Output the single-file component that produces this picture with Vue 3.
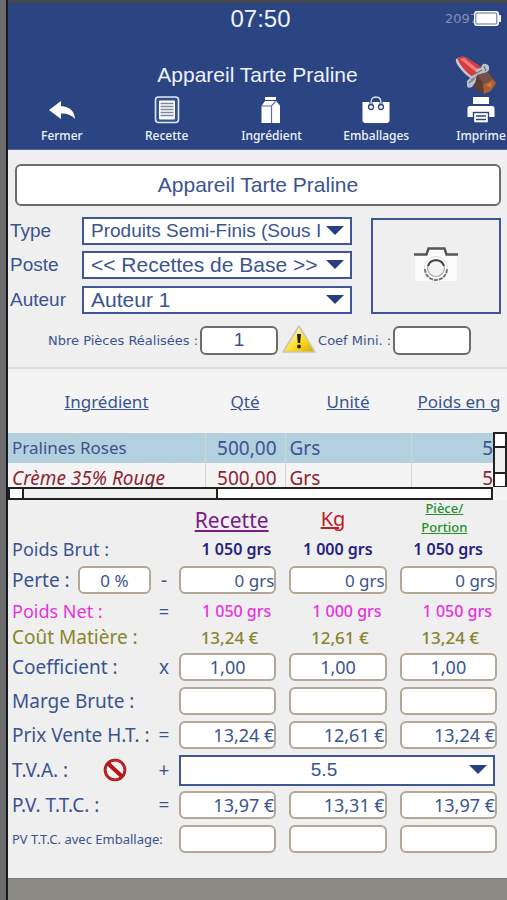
<template>
  <main class="screen">
    <header class="top">
      <div class="status">
        <span class="status-time">07:50</span>
        <span class="status-right">
          <span class="status-mem">2097</span>
          <svg class="battery" viewBox="0 0 27 15" aria-hidden="true">
            <rect x="0" y="0" width="25" height="15" rx="3" fill="#fff" />
            <rect x="24" y="4" width="3" height="7" rx="1" fill="#fff" />
            <rect x="1.8" y="2" width="21" height="11" rx="1" fill="none" stroke="#2b4583" stroke-width="0.8" />
          </svg>
        </span>
      </div>
      <div class="title-row">
        <h1>Appareil Tarte Praline</h1>
        <svg class="praline" viewBox="0 0 42 38" aria-hidden="true">
          <path d="M1 3 Q5 0 10 1 L32 15 L22 26 Q10 20 4 11 Q0 6 1 3Z" fill="#c3c7d2" />
          <path d="M2 2 Q7 -1 12 2 L31 14 L20 23 Q7 14 2 2Z" fill="#d83a40" />
          <path d="M5 3 L22 17 L25 15 L9 2Z" fill="#ee7c7c" />
          <path d="M12 25 L17 20 L22 17 L21 13 L26 12 Q27 7 31 8 Q35 9 34 14 L30 18 L24 22 L20 27 L17 31 Q12 33 12 29Z" fill="#b9c2cc" />
          <path d="M20 18 L27 14 M16 24 L25 19 M29 10 L31 15 M14 27 L19 23" stroke="#6f7b87" stroke-width="1.4" />
          <path d="M22 19 L33 16 L41 26 L36 35 L28 38 L19 32Z" fill="#5e3d36" />
          <path d="M22 19 L33 16 L38 23 L28 27Z" fill="#75524a" />
          <path d="M28 28 L38 23 L41 27 L36 35 L29 38Z" fill="#a95f35" />
          <path d="M31 29 L37 26 L36 32Z" fill="#c57c48" />
        </svg>
      </div>
      <nav class="toolbar">
        <button v-for="t in tools" :key="t.id" type="button" class="tool">
          <svg v-if="t.id === 'close'" viewBox="0 0 28 28" aria-hidden="true">
            <path d="M1 14 L13 5 V10 Q26 11 27 23 Q22 17 13 17.500 V23Z" fill="#fff" />
          </svg>
          <svg v-else-if="t.id === 'recipe'" viewBox="0 0 28 28" aria-hidden="true">
            <rect x="2.500" y="1" width="23" height="25.500" rx="3" fill="#33508f" stroke="#dfe9f8" stroke-width="1.600" />
            <rect x="6" y="4.500" width="16" height="19" rx="1" fill="#fff" />
            <path d="M7.500 7.500H20.500M7.500 10.500H20.500M7.500 13.500H20.500M7.500 16.500H20.500M7.500 19.500H20.500" stroke="#7f86a0" stroke-width="1.500" />
          </svg>
          <svg v-else-if="t.id === 'ingredient'" viewBox="0 0 28 28" aria-hidden="true">
            <path d="M8 1H19V4H8Z M8 5H19L23 9.500V27H4.500V10Z" fill="#fff" />
            <path d="M4.500 10H14.500L18.500 5.500M14.500 10V27" fill="none" stroke="#5a6ea3" stroke-width="1.200" />
          </svg>
          <svg v-else-if="t.id === 'pack'" viewBox="0 0 28 28" aria-hidden="true">
            <path d="M0.500 6H27.500V24Q27.500 27 24.500 27H3.500Q0.500 27 0.500 24Z" fill="#fff" />
            <path d="M9 9V6.500Q9 1 14 1Q19 1 19 6.500V9" fill="none" stroke="#2b4583" stroke-width="3" />
            <path d="M9 9V6.500Q9 1 14 1Q19 1 19 6.500V9" fill="none" stroke="#dfe9f8" stroke-width="1.300" />
            <circle cx="9" cy="11" r="2.500" fill="#fff" stroke="#2b4583" stroke-width="1.300" />
            <circle cx="19" cy="11" r="2.500" fill="#fff" stroke="#2b4583" stroke-width="1.300" />
          </svg>
          <svg v-else viewBox="0 0 28 28" aria-hidden="true">
            <path d="M6 1H22V8H6Z" fill="#fff" />
            <path d="M3 10H25Q27.500 10 27.500 12.500V21H0.500V12.500Q0.500 10 3 10Z" fill="#fff" />
            <rect x="6.500" y="16.500" width="15" height="10.500" fill="#fff" stroke="#2b4583" stroke-width="1.400" />
            <path d="M9 20H19M9 23.500H19" stroke="#2b4583" stroke-width="1.300" />
          </svg>
          <span>{{ t.label }}</span>
        </button>
      </nav>
    </header>

    <section class="form">
      <input v-model="name" class="name" type="text" aria-label="Nom de la recette" />
      <div class="form-main">
        <div class="fields">
          <template v-for="f in fields" :key="f.id">
            <label :for="f.id">{{ f.label }}</label>
            <div class="select-box">
              <select :id="f.id" :class="{ small: f.small }">
                <option>{{ f.value }}</option>
              </select>
              <span class="arrow"></span>
            </div>
          </template>
        </div>
        <button type="button" class="photo" aria-label="Photo">
          <svg viewBox="0 0 44 34" aria-hidden="true">
            <rect x="1" y="7" width="42" height="27" fill="#fbfbfb" />
            <path d="M13 7L15 2H30L32 7" fill="#fbfbfb" />
            <path d="M0 7.500H12.500L14.500 1.500H30.500L32.500 7.500H44" fill="none" stroke="#555" stroke-width="2.400" />
            <circle cx="22" cy="21" r="11.500" fill="#fff" stroke="#ddd" />
            <path d="M11 22A11 11 0 0 0 33 22" fill="none" stroke="#777" stroke-width="2" stroke-dasharray="4 1" />
            <circle cx="22" cy="21" r="8.500" fill="#f4f4f4" stroke="#aaa" stroke-width="1.200" />
            <path d="M14 19A8.500 8.500 0 0 1 30 19" fill="none" stroke="#444" stroke-width="2" />
          </svg>
        </button>
      </div>
      <div class="form-counts">
        <label for="pieces">Nbre Pièces Réalisées :</label>
        <input id="pieces" v-model="pieces" type="text" />
        <svg class="warn" viewBox="0 0 34 28" aria-hidden="true">
          <defs>
            <linearGradient id="warnFill" x1="0" y1="0" x2="1" y2="1">
              <stop offset="0.3" stop-color="#fff3a0" />
              <stop offset="0.6" stop-color="#fbd91c" />
              <stop offset="1" stop-color="#d9a400" />
            </linearGradient>
          </defs>
          <path d="M17 1L33 27H1Z" fill="url(#warnFill)" stroke="#c9c6b4" stroke-width="1.500" stroke-linejoin="round" />
          <path d="M15 9H19L18.200 18H15.800Z" fill="#222" />
          <circle cx="17" cy="21.500" r="2" fill="#222" />
        </svg>
        <label for="coef-mini">Coef Mini. :</label>
        <input id="coef-mini" type="text" />
      </div>
    </section>

    <section class="grid-box">
      <div class="grid-clip">
        <table>
          <thead>
            <tr>
              <th class="c-name"><a href="#">Ingrédient</a></th>
              <th class="c-qty"><a href="#">Qté</a></th>
              <th class="c-unit"><a href="#">Unité</a></th>
              <th class="c-weight"><a href="#">Poids en g</a></th>
            </tr>
          </thead>
          <tbody>
            <tr v-for="r in rows" :key="r.name" :class="r.cls">
              <td>{{ r.name }}</td>
              <td class="num">{{ r.qty }}</td>
              <td>{{ r.unit }}</td>
              <td class="num weight">{{ r.weight }}</td>
            </tr>
          </tbody>
        </table>
        <div class="vbar"><i></i><b></b><i></i></div>
      </div>
      <div class="hbar"><i></i><b></b></div>
    </section>

    <section class="calc">
      <div class="calc-row heads">
        <div class="lead"></div>
        <div class="vals">
          <a href="#" class="h-recipe">Recette</a>
          <a href="#" class="h-kg">Kg</a>
          <a href="#" class="h-piece">Pièce/<br />Portion</a>
        </div>
      </div>

      <div v-for="r in calc" :key="r.id" class="calc-row" :class="r.id">
        <div class="lead">
          <label v-if="r.type !== 'text'" :for="r.id + '-0'">{{ r.label }}</label>
          <span v-else>{{ r.label }}</span>
          <input v-if="r.id === 'perte'" v-model="lossPct" class="box pct" type="text" aria-label="Perte en pourcentage" />
          <button v-if="r.id === 'tva'" type="button" class="forbid" aria-label="Sans T.V.A.">
            <svg viewBox="0 0 24 24" aria-hidden="true">
              <circle cx="12" cy="12" r="9.900" fill="#f6f1f1" stroke="#8f1717" stroke-width="2.800" />
              <circle cx="12" cy="12" r="9.900" fill="none" stroke="#cf1f1f" stroke-width="1.600" />
              <path d="M5 5.500L19 18.500" stroke="#b81515" stroke-width="4" />
            </svg>
          </button>
          <span v-if="r.op" class="op">{{ r.op }}</span>
        </div>
        <div v-if="r.type === 'select'" class="select-box tva-box">
          <select :id="r.id + '-0'">
            <option>5.5</option>
          </select>
          <span class="arrow"></span>
        </div>
        <div v-else class="vals">
          <template v-for="(v, i) in r.values" :key="i">
            <span v-if="r.type === 'text'" class="val">{{ v }}</span>
            <input v-else :id="r.id + '-' + i" class="box" type="text" :value="v" :aria-label="i ? r.label + ' ' + units[i] : null" />
          </template>
        </div>
      </div>
    </section>
    <footer class="bottom"></footer>
  </main>
</template>

<script setup>
import { ref } from 'vue';

const name = ref('Appareil Tarte Praline');
const pieces = ref('1');
const lossPct = ref('0 %');

const units = ['Recette', 'Kg', 'Pièce/Portion'];

const tools = [
  { id: 'close', label: 'Fermer' },
  { id: 'recipe', label: 'Recette' },
  { id: 'ingredient', label: 'Ingrédient' },
  { id: 'pack', label: 'Emballages' },
  { id: 'print', label: 'Imprime' }
];

const fields = [
  { id: 'type', label: 'Type', value: 'Produits Semi-Finis (Sous I', small: true },
  { id: 'poste', label: 'Poste', value: '<< Recettes de Base >>' },
  { id: 'auteur', label: 'Auteur', value: 'Auteur 1' }
];

const rows = [
  { name: 'Pralines Roses', qty: '500,00', unit: 'Grs', weight: '5', cls: 'selected' },
  { name: 'Crème 35% Rouge', qty: '500,00', unit: 'Grs', weight: '5', cls: 'red' }
];

const calc = [
  { id: 'brut', label: 'Poids Brut :', type: 'text', values: ['1 050 grs', '1 000 grs', '1 050 grs'] },
  { id: 'perte', label: 'Perte :', op: '-', type: 'input', values: ['0 grs', '0 grs', '0 grs'] },
  { id: 'net', label: 'Poids Net :', op: '=', type: 'text', values: ['1 050 grs', '1 000 grs', '1 050 grs'] },
  { id: 'cout', label: 'Coût Matière :', type: 'text', values: ['13,24 €', '12,61 €', '13,24 €'] },
  { id: 'coef', label: 'Coefficient :', op: 'x', type: 'input', values: ['1,00', '1,00', '1,00'] },
  { id: 'marge', label: 'Marge Brute :', type: 'input', values: ['', '', ''] },
  { id: 'prix', label: 'Prix Vente H.T. :', op: '=', type: 'input', values: ['13,24 €', '12,61 €', '13,24 €'] },
  { id: 'tva', label: 'T.V.A. :', op: '+', type: 'select' },
  { id: 'ttc', label: 'P.V. T.T.C. :', op: '=', type: 'input', values: ['13,97 €', '13,31 €', '13,97 €'] },
  { id: 'emb', label: 'PV T.T.C. avec Emballage:', type: 'input', values: ['', '', ''] }
];
</script>

<style>
body {
  margin: 0;
  background: #6d6d6d;
}
</style>

<style scoped>
.screen {
  box-sizing: border-box;
  margin-left: 6px;
  border-left: 2px solid #15181f;
  background: #efefef;
  color: #3a548f;
  font-family: "Liberation Sans", Arial, sans-serif;
  overflow: hidden;
}
.screen *,
.screen *::before {
  box-sizing: border-box;
}
input,
select,
button {
  margin: 0;
  font: inherit;
  color: inherit;
}
button {
  padding: 0;
  border: 0;
  background: none;
}

/* en-tête */
.top {
  border-top: 3px solid #45484c;
  border-bottom: 1px solid #5068a0;
  background: #2b4583;
  color: #eef2fb;
}
.status {
  display: grid;
  grid-template-columns: 1fr auto 1fr;
  align-items: center;
  height: 31px;
  padding-left: 6px;
}
.status-time {
  grid-column: 2;
  font-size: 24px;
}
.status-right {
  display: flex;
  justify-content: flex-end;
  align-items: center;
  padding-right: 6px;
}
.status-mem {
  margin-right: -4px;
  font-family: "DejaVu Sans", sans-serif;
  font-size: 13px;
  color: #8291b5;
}
.battery {
  position: relative;
  width: 27px;
  height: 15px;
}
.title-row {
  display: grid;
  grid-template-columns: 1fr auto 1fr;
  align-items: center;
  height: 62px;
  padding-top: 20px;
}
h1 {
  grid-column: 2;
  margin: 0;
  font-size: 21px;
  font-weight: 400;
}
.praline {
  justify-self: end;
  width: 42px;
  height: 38px;
  margin-right: 10px;
}
.toolbar {
  display: flex;
  height: 53px;
}
.tool {
  flex: 0 0 21%;
  display: flex;
  flex-direction: column;
  align-items: center;
  padding-left: 3px;
  font-family: "Noto Sans", sans-serif;
  font-size: 12px;
  font-weight: 500;
  line-height: 22px;
  gap: 1px;
}
.tool svg {
  width: 28px;
  height: 28px;
}

/* fiche */
.form {
  padding: 14px 6px 12px 2px;
  border-bottom: 2px solid #dcdcdc;
}
.name {
  display: block;
  width: calc(100% - 5px);
  height: 42px;
  margin-left: 5px;
  border: 2px solid #6c6c6c;
  border-radius: 6px;
  background: #fff;
  text-align: center;
  font-size: 21px;
}
.form-main {
  display: flex;
  justify-content: space-between;
  gap: 19px;
  margin-top: 11px;
}
.fields {
  flex: 1;
  display: grid;
  grid-template-columns: 72px 1fr;
  row-gap: 6px;
  align-items: center;
  font-size: 19px;
}
.select-box {
  position: relative;
  height: 28px;
}
.select-box select {
  appearance: none;
  display: block;
  width: 100%;
  height: 100%;
  padding: 0 26px 0 7px;
  border: 2px solid #3f5796;
  border-radius: 0;
  background: #fff;
  font-size: 21px;
  line-height: 24px;
}
.select-box select.small {
  font-size: 19px;
}
.arrow {
  position: absolute;
  top: 50%;
  right: 8px;
  margin-top: -5px;
  border: 9px solid transparent;
  border-top-color: #253f80;
  border-bottom: 0;
  pointer-events: none;
}
.photo {
  flex: 0 0 130px;
  height: 96px;
  margin-top: 1px;
  border: 2px solid #3f5796;
}
.photo svg {
  width: 44px;
  height: 34px;
}
.form-counts {
  display: flex;
  align-items: center;
  margin-top: 11px;
  padding-left: 38px;
  font-family: "DejaVu Sans", sans-serif;
  font-size: 13px;
  white-space: nowrap;
}
.form-counts input {
  width: 78px;
  height: 29px;
  margin-left: 2px;
  border: 2px solid #6c6c6c;
  border-radius: 6px;
  background: #fff;
  text-align: center;
  font-family: "Liberation Sans", Arial, sans-serif;
  font-size: 19px;
}
.warn {
  width: 34px;
  height: 28px;
  margin: 0 2px 2px 4px;
}

/* liste des ingrédients */
.grid-box {
  background: #f4f4f4;
  font-family: "Noto Sans", sans-serif;
  font-size: 19px;
}
.grid-clip {
  position: relative;
  height: 118px;
  overflow: hidden;
}
table {
  width: 100%;
  border-collapse: collapse;
  table-layout: fixed;
}
th {
  height: 64px;
  padding: 0;
  font-size: 17px;
  font-weight: 400;
  white-space: nowrap;
}
th a {
  color: inherit;
}
.c-name {
  width: 197px;
}
.c-qty {
  width: 80px;
}
.c-unit {
  width: 126px;
}
td {
  height: 30px;
  padding: 0 4px;
  line-height: 20px;
  white-space: nowrap;
}
td + td {
  border-left: 1px solid #d5d5d5;
}
.num {
  padding-right: 8px;
  text-align: right;
}
.num.weight {
  padding-right: 14px;
}
.selected {
  background: #b3d0df;
}
.selected td:first-child {
  font-size: 17px;
}
.red {
  color: #8f2430;
}
.red td:first-child {
  font-style: italic;
}
.vbar {
  position: absolute;
  right: 0;
  bottom: 0;
  display: flex;
  flex-direction: column;
  width: 14px;
  height: 55px;
  border: 2px solid #222;
  border-bottom: 1px solid #222;
  background: #fff;
}
.vbar b {
  flex: 1;
  border: solid #222;
  border-width: 2px 0;
  background: #efefef;
}
.vbar i {
  height: 12px;
}
.hbar {
  display: flex;
  height: 13px;
  margin-right: 14px;
  border: 2px solid #222;
  background: #fff;
}
.hbar i {
  width: 12px;
}
.hbar b {
  width: 196px;
  border: solid #222;
  border-width: 0 2px;
  background: #efefef;
}

/* calculs */
.calc {
  padding: 0 10px 22px 4px;
  font-family: "Noto Sans", sans-serif;
  font-size: 17px;
}
.calc-row {
  display: flex;
  align-items: center;
  height: 34px;
}
.lead {
  flex: 0 0 167px;
  display: flex;
  align-items: center;
  padding-right: 9px;
  font-size: 19px;
  white-space: nowrap;
}
.op {
  width: 12px;
  margin-left: auto;
  text-align: center;
}
.vals {
  flex: 1;
  display: grid;
  grid-template-columns: repeat(3, minmax(0, 1fr));
  column-gap: 13px;
  align-items: center;
}
.val {
  padding-right: 5px;
  text-align: right;
  font-size: 16px;
  font-weight: 500;
  white-space: nowrap;
}
.box {
  width: 100%;
  height: 28px;
  padding: 0;
  border: 2px solid #b3a797;
  border-radius: 6px;
  background: #fff;
  text-align: right;
  line-height: 24px;
}
.pct {
  width: 73px;
  margin-left: auto;
  text-align: center;
  font-size: 17px;
}
.pct + .op {
  margin-left: 7px;
}
.heads {
  height: 36px;
}
.heads a {
  text-align: center;
}
.h-recipe {
  color: #7a1a86;
  font-size: 21px;
  padding: 4px 0 0 8px;
}
.h-kg {
  color: #bb2025;
  font-size: 20px;
  padding-right: 10px;
}
.h-piece {
  color: #23902b;
  font-size: 13px;
  font-weight: 500;
  line-height: 19px;
  padding-right: 8px;
}
.brut,
.net,
.cout {
  height: 26px;
}
.brut .lead,
.net .lead {
  font-size: 18px;
}
.brut .val {
  color: #23237f;
  font-weight: 600;
}
.brut .val + .val {
  padding-right: 14px;
}
.perte {
  height: 36px;
}
.net {
  color: #e832dd;
}
.net .op {
  color: #34508f;
}
.cout {
  color: #86862a;
}
.cout .val {
  padding-right: 18px;
  font-size: 17px;
}
.coef .box {
  text-align: center;
}
.coef .box,
.prix .box,
.ttc .box {
  font-size: 18px;
}
.forbid {
  width: 24px;
  height: 24px;
  margin-left: auto;
}
.forbid svg {
  display: block;
}
.forbid + .op {
  margin-left: 31px;
}
.tva {
  height: 36px;
}
.tva-box {
  flex: 1;
  height: 31px;
  margin-right: 2px;
}
.tva-box select {
  padding: 0 28px 0 2px;
  text-align: center;
  text-align-last: center;
  font-family: "Liberation Sans", Arial, sans-serif;
  font-size: 19px;
}
.emb .lead {
  font-size: 13px;
}
.bottom {
  height: 23px;
  border-top: 1px solid #7b7b77;
  background: #8a8983;
}
</style>
